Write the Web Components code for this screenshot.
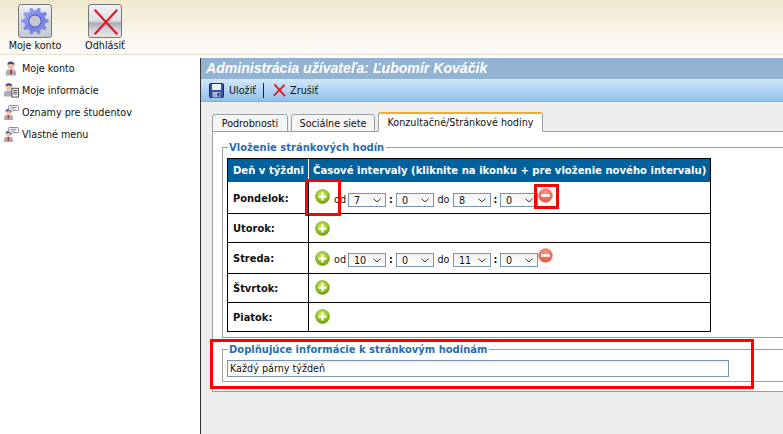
<!DOCTYPE html>
<html lang="sk">
<head>
<meta charset="utf-8">
<title>Administrácia užívateľa</title>
<style>
  html, body { margin: 0; height: 434px; overflow: hidden; background: #fff; }
  body { font: 10.7px "DejaVu Sans Condensed", "DejaVu Sans", Tahoma, sans-serif; color: #111; }
</style>
</head>
<body>
<app-shell>
  <top-bar slot="top">
    <big-button label="Moje konto" icon="gear"></big-button>
    <big-button label="Odhlásiť" icon="cross"></big-button>
  </top-bar>
  <side-menu slot="side">
    <menu-item icon="user">Moje konto</menu-item>
    <menu-item icon="doc">Moje informácie</menu-item>
    <menu-item icon="talk">Oznamy pre študentov</menu-item>
    <menu-item icon="talk">Vlastné menu</menu-item>
  </side-menu>
  <admin-page slot="main" heading="Administrácia užívateľa: Ľubomír Kováčik">
    <tab-strip active="2" tabs="Podrobnosti:76|Sociálne siete:84|Konzultačné/Stránkové hodiny:165">
      <group-box legend="Vloženie stránkových hodín" pad="3px 0 5px 4px">
        <hours-table>
          <hours-row day="Pondelok:" height="32" offs="7,11,6" intervals="7,0,8,0" mark></hours-row>
          <hours-row day="Utorok:" height="29" offs="7"></hours-row>
          <hours-row day="Streda:" height="31" offs="8,10,5" intervals="10,0,11,0"></hours-row>
          <hours-row day="Štvrtok:" height="29" offs="6"></hours-row>
          <hours-row day="Piatok:" height="28" offs="6" last></hours-row>
        </hours-table>
      </group-box>
      <group-box legend="Doplňujúce informácie k stránkovým hodinám" pad="3px 0 4px 4px" marked>
        <note-field value="Každý párny týždeň"></note-field>
      </group-box>
    </tab-strip>
  </admin-page>
</app-shell>

<script>
// malé ikony, kreslené ako inline SVG
const ICONS = {
  plus: `<svg width="15" height="15" viewBox="0 0 16 16"><defs><radialGradient id="g" cx=".45" cy=".3" r=".75"><stop offset="0" stop-color="#cfe85a"/><stop offset=".6" stop-color="#93c122"/><stop offset="1" stop-color="#5c8c10"/></radialGradient></defs><circle cx="8" cy="8" r="7.4" fill="url(#g)" stroke="#77a518" stroke-width=".7"/><path d="M6.800 3.800h2.400v3h3v2.400h-3v3H6.800v-3h-3V6.800h3z" fill="#fff"/></svg>`,
  minus: `<svg width="15" height="15" viewBox="0 0 16 16"><defs><radialGradient id="r" cx=".5" cy=".3" r=".75"><stop offset="0" stop-color="#f49a88"/><stop offset=".7" stop-color="#ea6450"/><stop offset="1" stop-color="#d04a38"/></radialGradient></defs><circle cx="8" cy="8" r="7.4" fill="url(#r)" stroke="#eb9c8e" stroke-width=".8"/><rect x="3.200" y="6.600" width="9.600" height="2.800" fill="#fff"/></svg>`,
  save: `<svg width="15" height="15" viewBox="0 0 15 15"><rect x=".5" y=".5" width="14" height="14" rx="1" fill="#3a4fa8" stroke="#1c2a70"/><rect x="3" y="1" width="9" height="6" fill="#eef1fb"/><rect x="3.500" y="9" width="8" height="5.500" fill="#a9b2c8"/><rect x="8.500" y="10" width="2" height="3.500" fill="#2a3a88"/></svg>`,
  cross: `<svg width="14" height="14" viewBox="0 0 14 14"><path d="M1.500 1l11.500 12.500M12.500 1.500L1 13" stroke="#d9182c" stroke-width="2" fill="none"/></svg>`,
  user: `<svg width="14" height="16" viewBox="0 0 15 16"><path d="M2 16v-3.500Q2 10 5 9.500h5q3 .5 3 3V16z" fill="#a8adb8"/><path d="M6.800 9.500h1.600l.4 4-1.200 2-1.200-2z" fill="#d0352c"/><circle cx="7.500" cy="5.500" r="3.600" fill="#f2c4a4"/><path d="M3.500 4.500Q4 .8 7.500 1T11.500 4.500Q7.500 3 3.500 4.500z" fill="#32508c"/></svg>`,
  doc: `<svg width="15" height="16" viewBox="0 0 17 17"><path d="M0 16v-4Q0 9.500 3 9h5q3 .5 3 3v4z" fill="#a8adb8"/><circle cx="5.500" cy="5" r="3.500" fill="#f2c4a4"/><path d="M1.500 4.200Q2 .6 5.500 .8T9.500 4.200Q5.500 2.800 1.500 4.200z" fill="#32508c"/><rect x="9" y="6.500" width="7.500" height="10" fill="#fff" stroke="#222" stroke-width=".9"/><path d="M10.500 9h4.500M10.500 11h4.500M10.500 13h4.500" stroke="#333"/></svg>`,
  talk: `<svg width="15" height="15" viewBox="0 0 16 16"><path d="M0 16v-2.500Q0 11 2.500 10.500h4q3 .5 3 3V16z" fill="#a8adb8"/><path d="M4.200 10.500h1l.4 3-1 2-.9-2z" fill="#d0352c"/><circle cx="4.700" cy="7.500" r="2.900" fill="#f2c4a4"/><path d="M1.500 7Q2 4 4.700 4.300T7.800 7Q4.700 5.700 1.500 7z" fill="#32508c"/><path d="M6 .5h8.500q1 0 1 1v3.500q0 1-1 1H9.500L7.500 8V6H6q-1 0-1-1V1.500q0-1 1-1z" fill="#fff" stroke="#667" stroke-width=".8"/><path d="M7 2.500h6.500M7 4.300h4.500" stroke="#889"/></svg>`
};

// vrátane zubov ozubeného kolesa
function gearPath(cx, cy, outer, inner, teeth) {
  let d = "";
  const step = (Math.PI * 2) / teeth;
  for (let i = 0; i < teeth; i++) {
    const a = i * step;
    const pts = [[a - step * 0.3, inner], [a - step * 0.17, outer], [a + step * 0.17, outer], [a + step * 0.3, inner]];
    pts.forEach(([ang, r], j) => {
      const x = (cx + Math.cos(ang) * r).toFixed(1);
      const y = (cy + Math.sin(ang) * r).toFixed(1);
      d += (i === 0 && j === 0 ? "M" : "L") + x + " " + y;
    });
  }
  return d + "Z";
}

const BIG_ICONS = {
  gear: `<svg width="32" height="32" viewBox="0 0 34 34"><defs><linearGradient id="gb" x1="0" y1="0" x2="1" y2="1"><stop offset="0" stop-color="#a4adf8"/><stop offset=".55" stop-color="#7480ec"/><stop offset="1" stop-color="#8c92c8"/></linearGradient></defs><path d="${gearPath(17, 17, 14.500, 11.500, 10)}" fill="url(#gb)"/><circle cx="17" cy="17" r="6.500" fill="#c4c8d4" stroke="#5a62b8" stroke-width="1.200"/></svg>`,
  cross: `<svg width="32" height="32" viewBox="0 0 34 34"><path d="M6 5l24 26M30 5L6 31" stroke="#dc1a30" stroke-width="2.400" fill="none"/></svg>`
};

class AppShell extends HTMLElement {
  constructor() {
    super();
    this.attachShadow({ mode: "open" });
    this.shadowRoot.innerHTML = `
      <style>
        :host { display: grid; grid-template: 55px 379px / 200px 583px; width: 783px; height: 434px; }
        .top { grid-column: 1 / 3; display: block; }
      </style>
      <div class="top"><slot name="top"></slot></div>
      <div><slot name="side"></slot></div>
      <div><slot name="main"></slot></div>
    `;
  }
}

class TopBar extends HTMLElement {
  constructor() {
    super();
    this.attachShadow({ mode: "open" });
    this.shadowRoot.innerHTML = `
      <style>
        :host { display: flex; box-sizing: border-box; height: 55px; padding: 4px 0 0 0;
          background: linear-gradient(#f0e7cc, #fbf8f0 70%, #fcfaf4); border-bottom: 1px solid #e6dfc9; }
      </style>
      <slot></slot>
    `;
  }
}

class BigButton extends HTMLElement {
  constructor() {
    super();
    this.attachShadow({ mode: "open" });
    const kind = this.getAttribute("icon");
    this.shadowRoot.innerHTML = `
      <style>
        :host { display: flex; flex-direction: column; align-items: center; width: 70px; }
        .box { width: 32px; height: 32px; border: 1px solid #77787c; border-radius: 3px; display: grid; place-items: center; overflow: hidden;
          background: ${kind === "cross"
            ? "linear-gradient(#eef0f2, #dfe1e4 48%, #a9acb1 58%, #cfd1d4 75%, #e6e7e9)"
            : "linear-gradient(#f0f1f4, #d2d4dc 55%, #c8cad2)"}; }
        .label { margin-top: 0; line-height: 15px; white-space: nowrap; color: #111; }
      </style>
      <div class="box">${BIG_ICONS[kind]}</div>
      <div class="label">${this.getAttribute("label")}</div>
    `;
  }
}

class SideMenu extends HTMLElement {
  constructor() {
    super();
    this.attachShadow({ mode: "open" });
    this.shadowRoot.innerHTML = `
      <style>
        :host { display: flex; flex-direction: column; gap: 6px; padding: 5px 0 0 4px; }
      </style>
      <slot></slot>
    `;
  }
}

class MenuItem extends HTMLElement {
  constructor() {
    super();
    this.attachShadow({ mode: "open" });
    this.shadowRoot.innerHTML = `
      <style>
        :host { display: flex; align-items: center; height: 16px; white-space: nowrap; }
        .ico { width: 18px; flex: none; display: flex; }
      </style>
      <span class="ico">${ICONS[this.getAttribute("icon")]}</span>
      <slot></slot>
    `;
  }
}

class AdminPage extends HTMLElement {
  constructor() {
    super();
    this.attachShadow({ mode: "open" });
    this.shadowRoot.innerHTML = `
      <style>
        :host { display: flex; flex-direction: column; box-sizing: border-box; height: 379px; padding-top: 3px; overflow: hidden; }
        .wrap { flex: 1; display: flex; flex-direction: column; border-left: 1px solid #333; min-height: 0; background: #eee; }
        h1 { margin: 0; height: 21px; padding-left: 5px; background: #93b3d2; color: #fff;
          font: italic bold 14.100px/21px "Liberation Sans", Arial, sans-serif; white-space: nowrap; }
        .tools { display: flex; align-items: center; height: 22px; padding-left: 8px; background: linear-gradient(#d3e8f9, #8ec0ea); border-bottom: 1px solid #7fb2e0; }
        .tools span { display: flex; align-items: center; }
        .tools svg { margin-right: 5px; }
        .tools .z svg { margin-right: 4px; }
        .sep { width: 1px; height: 15px; background: #222; margin: 0 9px 0 7px; }
      </style>
      <div class="wrap">
        <h1>${this.getAttribute("heading")}</h1>
        <div class="tools">
          <span>${ICONS.save}Uložiť</span>
          <div class="sep"></div>
          <span class="z">${ICONS.cross.replace('width="14"', 'width="13"')}Zrušiť</span>
        </div>
        <slot></slot>
      </div>
    `;
  }
}

class TabStrip extends HTMLElement {
  constructor() {
    super();
    this.attachShadow({ mode: "open" });
    const active = Number(this.getAttribute("active"));
    const tabs = this.getAttribute("tabs").split("|").map((t, i) => {
      const [label, width] = t.split(":");
      return `<div class="tab ${i === active ? "on" : ""}" style="width:${width}px">${label}</div>`;
    }).join("");
    this.shadowRoot.innerHTML = `
      <style>
        :host { display: block; padding: 10px 0 0 11px; flex: 1; }
        .tabs { display: flex; align-items: flex-end; gap: 3px; height: 20px; width: 600px; position: relative; z-index: 1; margin-bottom: -1px; }
        .tab { box-sizing: border-box; height: 18px; text-align: center; line-height: 17px; background: #f5f5f5; white-space: nowrap;
          border: 1px solid #98a2a6; border-radius: 3px 3px 0 0; }
        .on { height: 20px; background: #fff; border-top: 2px solid #f2ac2e; border-bottom-color: #fff; line-height: 17px; }
        .panel { box-sizing: border-box; width: 600px; height: 261px; background: #fff; border: 1px solid #98a2a6; padding: 8px 0 0 9px; }
      </style>
      <div class="tabs">${tabs}</div>
      <div class="panel"><slot></slot></div>
    `;
  }
}

class GroupBox extends HTMLElement {
  constructor() {
    super();
    this.attachShadow({ mode: "open" });
    const marked = this.hasAttribute("marked");
    this.shadowRoot.innerHTML = `
      <style>
        :host { display: block; position: relative; margin-bottom: 4px; }
        fieldset { margin: 0; width: 600px; box-sizing: border-box; border: 1px solid #98a2a6; padding: ${this.getAttribute("pad")}; min-width: 0; }
        legend { padding: 0 2px 0 1px; margin-left: 1px; color: #2a6cb4; font-weight: 700; font-size: 11.100px; line-height: 15px; white-space: nowrap; }
        .mark { position: absolute; left: -12px; top: -3px; width: 538px; height: 44px; border: 3px solid #f00; pointer-events: none; }
      </style>
      <fieldset>
        <legend>${this.getAttribute("legend")}</legend>
        <slot></slot>
      </fieldset>
      ${marked ? '<div class="mark"></div>' : ""}
    `;
  }
}

class HoursTable extends HTMLElement {
  constructor() {
    super();
    this.attachShadow({ mode: "open" });
    this.shadowRoot.innerHTML = `
      <style>
        :host { display: block; width: 482px; border: 1px solid #000; }
        .head { display: grid; grid-template-columns: 80px 1fr; height: 23px; background: #00619f; color: #fff; font-weight: 700; font-size: 11.200px; line-height: 23px; white-space: nowrap; }
        .head div { padding-left: 5px; }
        .head div + div { border-left: 1px solid #fff; padding-left: 4px; }
      </style>
      <div class="head"><div>Deň v týždni</div><div>Časové intervaly (kliknite na ikonku + pre vloženie nového intervalu)</div></div>
      <slot></slot>
    `;
  }
}

class HoursRow extends HTMLElement {
  constructor() {
    super();
    this.attachShadow({ mode: "open" });
    const h = Number(this.getAttribute("height"));
    const [plusTop, selTop, minusTop] = this.getAttribute("offs").split(",");
    const iv = this.getAttribute("intervals");
    let extra = "";
    if (iv) {
      const [a, b, c, d] = iv.split(",");
      extra = `
        <span class="w od">od</span>
        <time-select value="${a}"></time-select><span class="w colon">:</span>
        <time-select value="${b}"></time-select><span class="w do">do</span>
        <time-select value="${c}"></time-select><span class="w colon c2">:</span>
        <time-select value="${d}"></time-select>
        <span class="minus">${ICONS.minus}</span>`;
    }
    const mark = this.hasAttribute("mark");
    this.shadowRoot.innerHTML = `
      <style>
        :host { display: grid; grid-template-columns: 80px 1fr; box-sizing: border-box; height: ${h}px; position: relative; ${this.hasAttribute("last") ? "" : "border-bottom: 1px solid #000;"} }
        .day { padding-left: 5px; font-weight: 700; font-size: 11px; line-height: ${h + 1}px; }
        .cell { border-left: 1px solid #000; display: flex; align-items: flex-start; padding-left: 6px; white-space: nowrap; }
        .plus { display: flex; flex: none; margin-top: ${plusTop}px; }
        .w { margin-top: ${Number(selTop) - 1}px; line-height: 16px; text-align: center; flex: none; }
        .od { width: 16px; margin-left: 2px; }
        .do { width: 19px; }
        .colon { width: 10px; font-weight: 700; }
        .c2 { width: 9px; }
        .minus { display: flex; margin-top: ${minusTop}px; }
        time-select { margin-top: ${selTop}px; }
        .m1, .m2 { position: absolute; border: 3px solid #f00; box-sizing: border-box; pointer-events: none; }
        .m1 { left: 77px; top: -3px; width: 36px; height: 37px; }
        .m2 { left: 306px; top: 2px; width: 25px; height: 25px; }
      </style>
      <div class="day">${this.getAttribute("day")}</div>
      <div class="cell"><span class="plus">${ICONS.plus}</span>${extra}</div>
      ${mark ? '<div class="m1"></div><div class="m2"></div>' : ""}
    `;
  }
}

class TimeSelect extends HTMLElement {
  constructor() {
    super();
    this.attachShadow({ mode: "open" });
    this.shadowRoot.innerHTML = `
      <style>
        :host { display: flex; align-items: center; justify-content: space-between; box-sizing: border-box; width: 38px; height: 14px; flex: none;
          padding: 0 4px 0 5px; border: 1px solid #7b93b3; background: linear-gradient(#f3f3f3, #fff); }
      </style>
      <span>${this.getAttribute("value")}</span>
      <svg width="8" height="5" viewBox="0 0 9 5"><path d="M.5.5l4 3.500 4-3.500" fill="none" stroke="#333" stroke-width="1.100"/></svg>
    `;
  }
}

class NoteField extends HTMLElement {
  constructor() {
    super();
    this.attachShadow({ mode: "open" });
    this.shadowRoot.innerHTML = `
      <style>
        :host { display: block; box-sizing: border-box; width: 502px; height: 17px; padding-left: 2px; border: 1px solid #7b93b3;
          background: linear-gradient(#eee, #fff 30%); line-height: 15px; white-space: nowrap; }
      </style>
      ${this.getAttribute("value")}
    `;
  }
}

customElements.define("time-select", TimeSelect);
customElements.define("note-field", NoteField);
customElements.define("hours-row", HoursRow);
customElements.define("hours-table", HoursTable);
customElements.define("group-box", GroupBox);
customElements.define("tab-strip", TabStrip);
customElements.define("admin-page", AdminPage);
customElements.define("menu-item", MenuItem);
customElements.define("side-menu", SideMenu);
customElements.define("big-button", BigButton);
customElements.define("top-bar", TopBar);
customElements.define("app-shell", AppShell);
</script>
</body>
</html>
